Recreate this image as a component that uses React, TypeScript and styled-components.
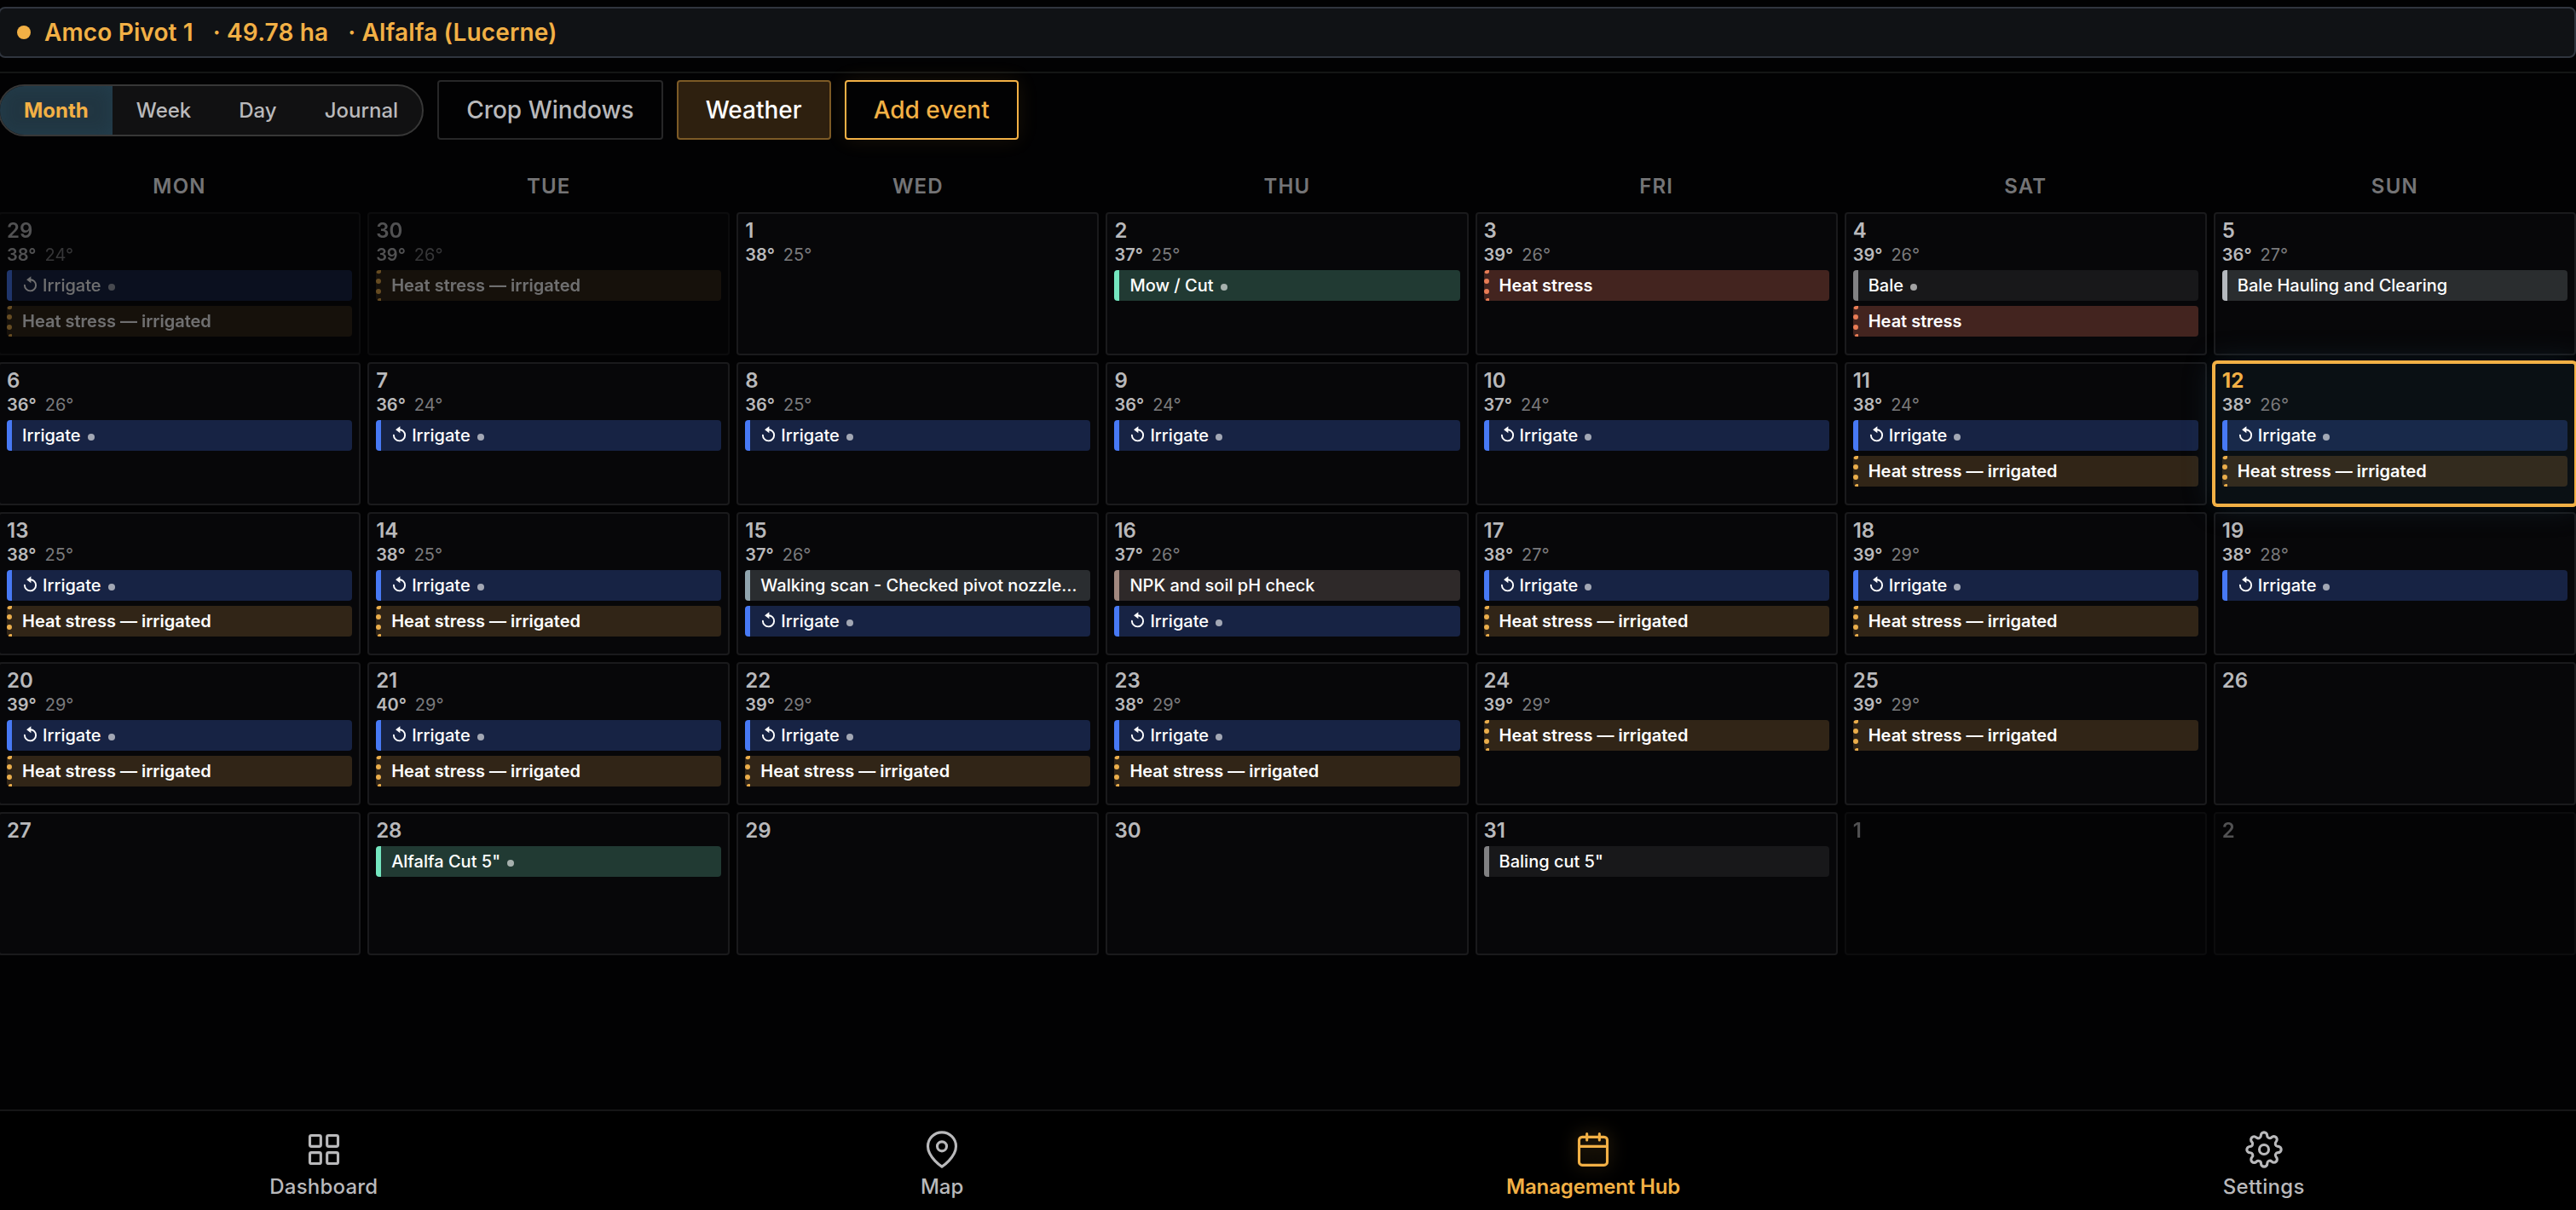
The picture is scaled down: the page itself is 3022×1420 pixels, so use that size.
import { ReactNode } from 'react';
import styled, { createGlobalStyle, css } from 'styled-components';

const AMBER = '#f2b045';

const GlobalStyle = createGlobalStyle`
	* {
		box-sizing: border-box;
	}
	html, body {
		margin: 0;
		background: #020203;
		overflow: hidden;
	}
	body {
		font-family: Inter, 'Liberation Sans', sans-serif;
		color: #b9b9bb;
		-webkit-font-smoothing: antialiased;
	}
`;

const Page = styled.div`
	width: 3024px;
	height: 1420px;
	margin-left: -2px;
	padding-top: 8px;
	display: flex;
	flex-direction: column;
`;

const FieldBar = styled.header`
	height: 60px;
	flex: none;
	display: flex;
	align-items: center;
	padding: 0 20px;
	border: 2px solid #30353e;
	border-radius: 8px;
	background: #101215;
	color: ${AMBER};
	font-size: 28px;
	font-weight: 600;
	letter-spacing: 0.14px;
	white-space: pre;
`;

const FieldDot = styled.span`
	width: 16px;
	height: 16px;
	border-radius: 50%;
	background: ${AMBER};
	margin-right: 16px;
`;

const FieldMeta = styled.span`
	margin-left: 23px;
`;

const Toolbar = styled.div`
	height: 94px;
	margin-top: 16px;
	flex: none;
	display: flex;
	align-items: center;
	gap: 16px;
	border-top: 2px solid #141615;
	padding-bottom: 6px;
`;

const Segments = styled.div`
	height: 61px;
	display: flex;
	border: 2px solid #373737;
	border-radius: 31px;
	background: #111112;
	overflow: hidden;
`;

const Segment = styled.button<{ $active?: boolean }>`
	border: 0;
	padding: 0 28px;
	background: transparent;
	font: 500 24px Inter, sans-serif;
	color: #b9b9bb;
	${(props) =>
		props.$active &&
		css`
			background: #213642;
			box-shadow: inset 0 0 20px rgba(40, 80, 100, 0.35);
			color: ${AMBER};
			font-weight: 700;
		`}
`;

const tones = {
	plain: css`
		border-color: #272728;
		background: #020203;
		color: #b9b9bb;
	`,
	active: css`
		border-color: #7c5a26;
		background: #2e200f;
		color: #fff;
	`,
	accent: css`
		border-color: ${AMBER};
		background: #020203;
		color: ${AMBER};
		box-shadow: 0 0 24px rgba(242, 176, 69, 0.1);
	`
};

const ToolButton = styled.button<{ $tone: keyof typeof tones }>`
	height: 70px;
	padding: 0 32px;
	border: 2px solid;
	border-radius: 4px;
	font: 500 28px Inter, sans-serif;
	${(props) => tones[props.$tone]}
`;

const WeekHeader = styled.div`
	display: grid;
	grid-template-columns: repeat(7, 1fr);
	gap: 8px;
	height: 71px;
	flex: none;
	padding-top: 26px;
	font-size: 24px;
	line-height: 30px;
	font-weight: 600;
	letter-spacing: 1.2px;
	text-align: center;
	color: #747476;
`;

const MonthGrid = styled.main`
	display: grid;
	grid-template-columns: repeat(7, minmax(0, 1fr));
	grid-auto-rows: 168px;
	gap: 8px;
`;

const DayCell = styled.section<{ $outside?: boolean; $today?: boolean }>`
	border: 2px solid #1a1a1c;
	border-radius: 4px;
	padding: 8px;
	background: #070709;
	opacity: ${(props) => (props.$outside ? 0.43 : 1)};
	${(props) =>
		props.$today &&
		css`
			border-color: ${AMBER};
			background: #0a1014;
			box-shadow:
				0 0 0 2px ${AMBER},
				0 0 36px rgba(50, 100, 125, 0.28);
			z-index: 1;
		`}
`;

const DayNumber = styled.div<{ $today?: boolean }>`
	font-size: 24px;
	line-height: 24px;
	font-weight: ${(props) => (props.$today ? 700 : 600)};
	color: ${(props) => (props.$today ? AMBER : '#b9b9bb')};
	margin-bottom: 6px;
`;

const Temps = styled.div`
	display: flex;
	gap: 10px;
	font-size: 20px;
	line-height: 20px;
	font-weight: 600;
	margin-bottom: 8px;
`;

const Low = styled.span`
	font-weight: 400;
	color: #7a7a7c;
`;

const Events = styled.div`
	display: flex;
	flex-direction: column;
	gap: 6px;
`;

const kinds = {
	irrigate: css`
		background: #172344;
		border-left-color: #4779f5;
	`,
	cut: css`
		background: #213a33;
		border-left-color: #74e6bf;
	`,
	stress: css`
		background: #43241f;
		border-left: 6px dotted #e87c55;
		font-weight: 600;
	`,
	stressIrrigated: css`
		background: #312517;
		border-left: 6px dotted #eaad4b;
		font-weight: 600;
	`,
	bale: css`
		background: #18181a;
		border-left-color: #818183;
	`,
	haul: css`
		background: #2a2d2f;
		border-left-color: #b5b9be;
	`,
	scan: css`
		background: #2a2d30;
		border-left-color: #90a4ae;
	`,
	soil: css`
		background: #2e2929;
		border-left-color: #a1887f;
	`
};

type Kind = keyof typeof kinds;

const EventBar = styled.div<{ $kind: Kind; $today?: boolean }>`
	height: 36px;
	display: flex;
	align-items: center;
	padding: 0 12px;
	border-left: 6px solid;
	border-radius: 4px;
	color: #fff;
	font-size: 20px;
	font-weight: 500;
	white-space: nowrap;
	${(props) => kinds[props.$kind]}
	${(props) =>
		props.$today &&
		css`
			background: ${props.$kind === 'irrigate' ? '#18294a' : '#332b1e'};
		`}

	svg {
		margin: 0 5px 2px 0;
	}
`;

const StatusDot = styled.i`
	width: 8px;
	height: 8px;
	margin: 4px 0 0 8px;
	border-radius: 50%;
	background: rgba(255, 255, 255, 0.6);
`;

const BottomNav = styled.nav`
	margin-top: auto;
	height: 118px;
	flex: none;
	display: flex;
	justify-content: space-around;
	border-top: 2px solid #151516;
	background: #000;
`;

const NavItem = styled.a<{ $active?: boolean; $tracking: number }>`
	display: flex;
	flex-direction: column;
	align-items: center;
	gap: 7px;
	padding-top: 23px;
	font-size: 24px;
	line-height: 30px;
	font-weight: ${(props) => (props.$active ? 600 : 500)};
	letter-spacing: ${(props) => props.$tracking}px;
	color: ${(props) => (props.$active ? AMBER : '#b9b9bb')};

	svg {
		${(props) => props.$active && 'filter: drop-shadow(0 0 10px rgba(242, 176, 69, 0.35));'}
	}
`;

function RepeatIcon() {
	return (
		<svg width="19" height="20" viewBox="0 0 19 20" fill="none">
			<path
				d="M9.6 4.2a6.6 6.6 0 1 1-6.7 6.6"
				stroke="currentColor"
				strokeWidth="1.9"
				strokeLinecap="round"
			/>
			<path d="M5.1 4.2 10.4.2v8z" fill="currentColor" />
		</svg>
	);
}

function NavIcon(props: { children: ReactNode }) {
	return (
		<svg
			width="44"
			height="44"
			viewBox="0 0 24 24"
			fill="none"
			stroke="currentColor"
			strokeWidth="1.7"
			strokeLinecap="round"
			strokeLinejoin="round"
		>
			{props.children}
		</svg>
	);
}

type CalendarEvent = { kind: Kind; title: string; repeat?: boolean; dot?: boolean };
type Day = {
	n: number;
	hi?: number;
	lo?: number;
	events?: CalendarEvent[];
	outside?: boolean;
	today?: boolean;
};

const irrigate: CalendarEvent = { kind: 'irrigate', title: 'Irrigate', repeat: true, dot: true };
const heat: CalendarEvent = { kind: 'stress', title: 'Heat stress' };
const heatIrr: CalendarEvent = { kind: 'stressIrrigated', title: 'Heat stress — irrigated' };

const days: Day[] = [
	{ n: 29, hi: 38, lo: 24, events: [irrigate, heatIrr], outside: true },
	{ n: 30, hi: 39, lo: 26, events: [heatIrr], outside: true },
	{ n: 1, hi: 38, lo: 25 },
	{ n: 2, hi: 37, lo: 25, events: [{ kind: 'cut', title: 'Mow / Cut', dot: true }] },
	{ n: 3, hi: 39, lo: 26, events: [heat] },
	{ n: 4, hi: 39, lo: 26, events: [{ kind: 'bale', title: 'Bale', dot: true }, heat] },
	{ n: 5, hi: 36, lo: 27, events: [{ kind: 'haul', title: 'Bale Hauling and Clearing' }] },
	{ n: 6, hi: 36, lo: 26, events: [{ ...irrigate, repeat: false }] },
	{ n: 7, hi: 36, lo: 24, events: [irrigate] },
	{ n: 8, hi: 36, lo: 25, events: [irrigate] },
	{ n: 9, hi: 36, lo: 24, events: [irrigate] },
	{ n: 10, hi: 37, lo: 24, events: [irrigate] },
	{ n: 11, hi: 38, lo: 24, events: [irrigate, heatIrr] },
	{ n: 12, hi: 38, lo: 26, events: [irrigate, heatIrr], today: true },
	{ n: 13, hi: 38, lo: 25, events: [irrigate, heatIrr] },
	{ n: 14, hi: 38, lo: 25, events: [irrigate, heatIrr] },
	{
		n: 15,
		hi: 37,
		lo: 26,
		events: [{ kind: 'scan', title: 'Walking scan - Checked pivot nozzle…' }, irrigate]
	},
	{ n: 16, hi: 37, lo: 26, events: [{ kind: 'soil', title: 'NPK and soil pH check' }, irrigate] },
	{ n: 17, hi: 38, lo: 27, events: [irrigate, heatIrr] },
	{ n: 18, hi: 39, lo: 29, events: [irrigate, heatIrr] },
	{ n: 19, hi: 38, lo: 28, events: [irrigate] },
	{ n: 20, hi: 39, lo: 29, events: [irrigate, heatIrr] },
	{ n: 21, hi: 40, lo: 29, events: [irrigate, heatIrr] },
	{ n: 22, hi: 39, lo: 29, events: [irrigate, heatIrr] },
	{ n: 23, hi: 38, lo: 29, events: [irrigate, heatIrr] },
	{ n: 24, hi: 39, lo: 29, events: [heatIrr] },
	{ n: 25, hi: 39, lo: 29, events: [heatIrr] },
	{ n: 26 },
	{ n: 27 },
	{ n: 28, events: [{ kind: 'cut', title: 'Alfalfa Cut 5"', dot: true }] },
	{ n: 29 },
	{ n: 30 },
	{ n: 31, events: [{ kind: 'bale', title: 'Baling cut 5"' }] },
	{ n: 1, outside: true },
	{ n: 2, outside: true }
];

function DayView({ day }: { day: Day }) {
	return (
		<DayCell $outside={day.outside} $today={day.today}>
			<DayNumber $today={day.today}>{day.n}</DayNumber>
			{day.hi && (
				<Temps>
					<span>{day.hi}°</span>
					<Low>{day.lo}°</Low>
				</Temps>
			)}
			<Events>
				{day.events?.map((event) => (
					<EventBar key={event.title} $kind={event.kind} $today={day.today}>
						{event.repeat && <RepeatIcon />}
						{event.title}
						{event.dot && <StatusDot />}
					</EventBar>
				))}
			</Events>
		</DayCell>
	);
}

export default function App() {
	return (
		<>
			<GlobalStyle />
			<Page>
				<FieldBar>
					<FieldDot />
					<span>Amco Pivot 1</span>
					<FieldMeta>· 49.78 ha</FieldMeta>
					<FieldMeta>· Alfalfa (Lucerne)</FieldMeta>
				</FieldBar>
				<Toolbar>
					<Segments>
						<Segment $active>Month</Segment>
						<Segment>Week</Segment>
						<Segment>Day</Segment>
						<Segment>Journal</Segment>
					</Segments>
					<ToolButton $tone="plain">Crop Windows</ToolButton>
					<ToolButton $tone="active">Weather</ToolButton>
					<ToolButton $tone="accent">Add event</ToolButton>
				</Toolbar>
				<WeekHeader>
					{['MON', 'TUE', 'WED', 'THU', 'FRI', 'SAT', 'SUN'].map((name) => (
						<span key={name}>{name}</span>
					))}
				</WeekHeader>
				<MonthGrid>
					{days.map((day, i) => (
						<DayView key={i} day={day} />
					))}
				</MonthGrid>
				<BottomNav>
					<NavItem $tracking={0.2}>
						<NavIcon>
							<rect x="3" y="3" width="7" height="7" rx="1" />
							<rect x="14" y="3" width="7" height="7" rx="1" />
							<rect x="3" y="14" width="7" height="7" rx="1" />
							<rect x="14" y="14" width="7" height="7" rx="1" />
						</NavIcon>
						Dashboard
					</NavItem>
					<NavItem $tracking={0}>
						<NavIcon>
							<path d="M21 10c0 7-9 13-9 13s-9-6-9-13a9 9 0 0 1 18 0z" />
							<circle cx="12" cy="10" r="3" />
						</NavIcon>
						Map
					</NavItem>
					<NavItem $active $tracking={-0.15}>
						<NavIcon>
							<rect x="3" y="4" width="18" height="18" rx="2" />
							<path d="M16 2v4M8 2v4M3 10h18" />
						</NavIcon>
						Management Hub
					</NavItem>
					<NavItem $tracking={0.3}>
						<NavIcon>
							<circle cx="12" cy="12" r="3" />
							<path d="M19.4 15a1.65 1.65 0 0 0 .33 1.82l.06.06a2 2 0 0 1 0 2.83 2 2 0 0 1-2.83 0l-.06-.06a1.65 1.65 0 0 0-1.82-.33 1.65 1.65 0 0 0-1 1.51V21a2 2 0 0 1-2 2 2 2 0 0 1-2-2v-.09A1.65 1.65 0 0 0 9 19.4a1.65 1.65 0 0 0-1.82.33l-.06.06a2 2 0 0 1-2.83 0 2 2 0 0 1 0-2.83l.06-.06a1.65 1.65 0 0 0 .33-1.82 1.65 1.65 0 0 0-1.51-1H3a2 2 0 0 1-2-2 2 2 0 0 1 2-2h.09A1.65 1.65 0 0 0 4.6 9a1.65 1.65 0 0 0-.33-1.82l-.06-.06a2 2 0 0 1 0-2.83 2 2 0 0 1 2.83 0l.06.06a1.65 1.65 0 0 0 1.82.33H9a1.65 1.65 0 0 0 1-1.51V3a2 2 0 0 1 2-2 2 2 0 0 1 2 2v.09a1.65 1.65 0 0 0 1 1.51 1.65 1.65 0 0 0 1.82-.33l.06-.06a2 2 0 0 1 2.83 0 2 2 0 0 1 0 2.83l-.06.06a1.65 1.65 0 0 0-.33 1.82V9a1.65 1.65 0 0 0 1.51 1H21a2 2 0 0 1 2 2 2 2 0 0 1-2 2h-.09a1.65 1.65 0 0 0-1.51 1z" />
						</NavIcon>
						Settings
					</NavItem>
				</BottomNav>
			</Page>
		</>
	);
}
